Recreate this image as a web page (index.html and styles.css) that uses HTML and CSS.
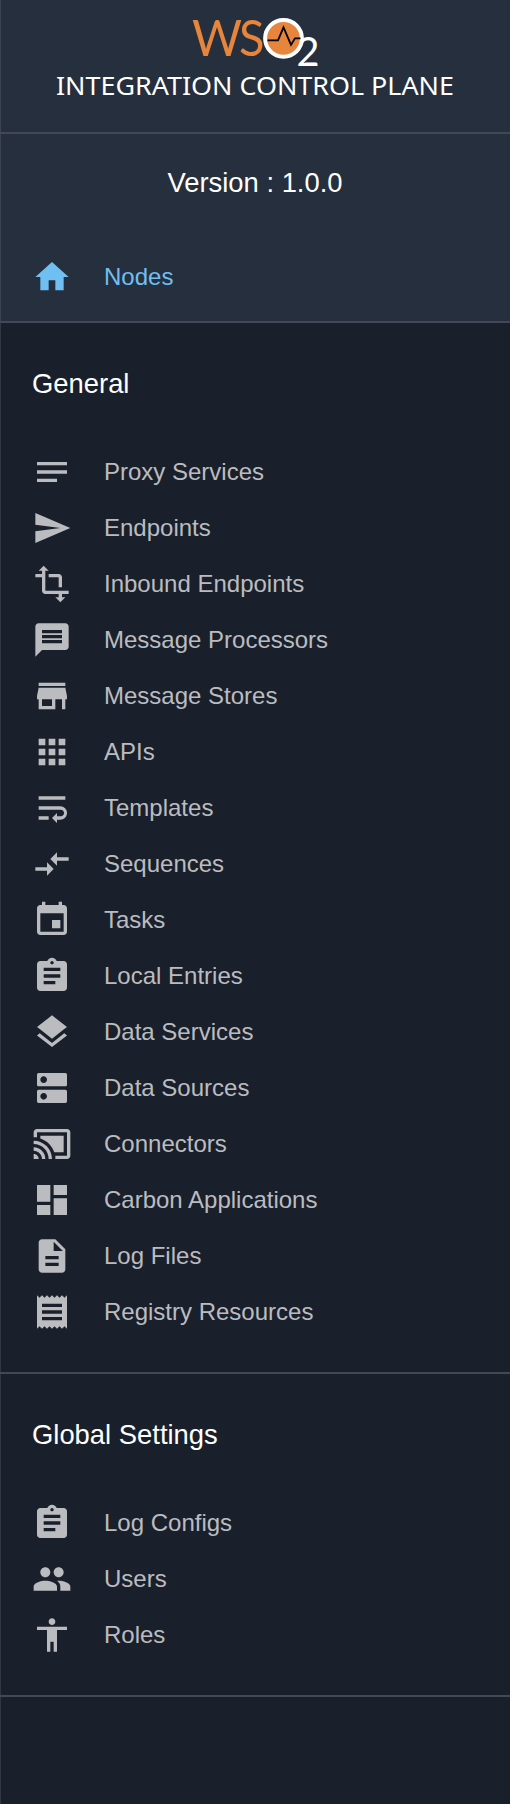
FILE: index.html
```html
<!DOCTYPE html>
<html lang="en">
<head>
<meta charset="utf-8">
<title>Integration Control Plane</title>
<link rel="stylesheet" href="styles.css">
</head>
<body>
<nav class="sidebar">
  <header class="brand">
    <svg class="brand-logo" width="510" height="110" viewBox="0 0 510 110">
      <text class="logo-letter" x="192" y="56" font-size="50" textLength="50" lengthAdjust="spacingAndGlyphs">W</text>
      <text class="logo-letter" x="239" y="56" font-size="50" textLength="25.5" lengthAdjust="spacingAndGlyphs">S</text>
      <circle cx="283.5" cy="38.3" r="18.4" fill="#e6853b" stroke="#fff" stroke-width="4"/>
      <path d="M267.5 40.300h10.500l5.500-13 7.500 17.500 4-6.500h5.500" fill="none" stroke="#000" stroke-width="1.8"/>
      <text class="logo-sub" x="296.5" y="66" font-size="40" textLength="23" lengthAdjust="spacingAndGlyphs">2</text>
      <text class="logo-title" x="56" y="94.5" font-size="26" textLength="398" lengthAdjust="spacingAndGlyphs">INTEGRATION CONTROL PLANE</text>
    </svg>
  </header>
  <section class="home">
    <p class="version">Version : 1.0.0</p>
    <a class="item active"><svg class="icon" viewBox="0 0 24 24"><path d="M10 20v-6h4v6h5v-8h3L12 3 2 12h3v8z"/></svg><span>Nodes</span></a>
  </section>
  <section class="group">
    <h2 class="heading">General</h2>
    <a class="item"><svg class="icon" viewBox="0 0 24 24"><path d="M3 18h12v-2H3v2zM3 6v2h18V6H3zm0 7h18v-2H3v2z"/></svg><span>Proxy Services</span></a>
    <a class="item"><svg class="icon" viewBox="0 0 24 24"><path d="M2.01 21L23 12 2.01 3 2 10l15 2-15 2z"/></svg><span>Endpoints</span></a>
    <a class="item"><svg class="icon" viewBox="0 0 24 24"><path d="M22 18v-2H8V4h2L7 1 4 4h2v2H2v2h4v8c0 1.100.9 2 2 2h8v2h-2l3 3 3-3h-2v-2h4zM10 8h6v6h2V8c0-1.100-.9-2-2-2h-6v2z"/></svg><span>Inbound Endpoints</span></a>
    <a class="item"><svg class="icon" viewBox="0 0 24 24"><path d="M20 2H4c-1.100 0-1.990.9-1.990 2L2 22l4-4h14c1.100 0 2-.9 2-2V4c0-1.100-.9-2-2-2zm-2 12H6v-2h12v2zm0-3H6V9h12v2zm0-3H6V6h12v2z"/></svg><span>Message Processors</span></a>
    <a class="item"><svg class="icon" viewBox="0 0 24 24"><path d="M20 4H4v2h16V4zm1 10v-2l-1-5H4l-1 5v2h1v6h10v-6h4v6h2v-6h1zm-9 4H6v-4h6v4z"/></svg><span>Message Stores</span></a>
    <a class="item"><svg class="icon" viewBox="0 0 24 24"><path d="M4 8h4V4H4v4zm6 12h4v-4h-4v4zm-6 0h4v-4H4v4zm0-6h4v-4H4v4zm6 0h4v-4h-4v4zm6-10v4h4V4h-4zm-6 4h4V4h-4v4zm6 6h4v-4h-4v4zm0 6h4v-4h-4v4z"/></svg><span>APIs</span></a>
    <a class="item"><svg class="icon" viewBox="0 0 24 24"><path d="M4 19h6v-2H4v2zM20 5H4v2h16V5zm-3 6H4v2h13.250c1.100 0 2 .9 2 2s-.9 2-2 2H15v-2l-3 3 3 3v-2h2c2.210 0 4-1.790 4-4s-1.790-4-4-4z"/></svg><span>Templates</span></a>
    <a class="item"><svg class="icon" viewBox="0 0 24 24"><path d="M9.010 14H2v2h7.010v3L13 15l-3.990-4v3zm5.980-1v-3H22V8h-7.010V5L11 9l3.990 4z"/></svg><span>Sequences</span></a>
    <a class="item"><svg class="icon" viewBox="0 0 24 24"><path d="M17 12h-5v5h5v-5zM16 1v2H8V1H6v2H5c-1.110 0-1.990.9-1.990 2L3 19c0 1.100.89 2 2 2h14c1.100 0 2-.9 2-2V5c0-1.100-.9-2-2-2h-1V1h-2zm3 18H5V8h14v11z"/></svg><span>Tasks</span></a>
    <a class="item"><svg class="icon" viewBox="0 0 24 24"><path d="M19 3h-4.180C14.400 1.840 13.300 1 12 1c-1.300 0-2.400.84-2.820 2H5c-1.100 0-2 .9-2 2v14c0 1.100.9 2 2 2h14c1.100 0 2-.9 2-2V5c0-1.100-.9-2-2-2zm-7 0c.55 0 1 .45 1 1s-.45 1-1 1-1-.45-1-1 .45-1 1-1zm2 14H7v-2h7v2zm3-4H7v-2h10v2zm0-4H7V7h10v2z"/></svg><span>Local Entries</span></a>
    <a class="item"><svg class="icon" viewBox="0 0 24 24"><path d="M11.990 18.540l-7.370-5.730L3 14.070l9 7 9-7-1.630-1.270-7.380 5.740zM12 16l7.360-5.730L21 9l-9-7-9 7 1.630 1.270L12 16z"/></svg><span>Data Services</span></a>
    <a class="item"><svg class="icon" viewBox="0 0 24 24"><path d="M20 13H4c-.55 0-1 .45-1 1v6c0 .55.45 1 1 1h16c.55 0 1-.45 1-1v-6c0-.55-.45-1-1-1zM7 19c-1.100 0-2-.9-2-2s.9-2 2-2 2 .9 2 2-.9 2-2 2zM20 3H4c-.55 0-1 .45-1 1v6c0 .55.45 1 1 1h16c.55 0 1-.45 1-1V4c0-.55-.45-1-1-1zM7 9c-1.100 0-2-.9-2-2s.9-2 2-2 2 .9 2 2-.9 2-2 2z"/></svg><span>Data Sources</span></a>
    <a class="item"><svg class="icon" viewBox="0 0 24 24"><path d="M1 18v3h3c0-1.660-1.340-3-3-3zm0-4v2c2.760 0 5 2.240 5 5h2c0-3.870-3.130-7-7-7zm18-7H5v1.630c3.960 1.280 7.090 4.410 8.370 8.370H19V7zM1 10v2c4.970 0 9 4.030 9 9h2c0-6.080-4.930-11-11-11zm20-7H3c-1.100 0-2 .9-2 2v3h2V5h18v14h-7v2h7c1.100 0 2-.9 2-2V5c0-1.100-.9-2-2-2z"/></svg><span>Connectors</span></a>
    <a class="item"><svg class="icon" viewBox="0 0 24 24"><path d="M3 13h8V3H3v10zm0 8h8v-6H3v6zm10 0h8V11h-8v10zm0-18v6h8V3h-8z"/></svg><span>Carbon Applications</span></a>
    <a class="item"><svg class="icon" viewBox="0 0 24 24"><path d="M14 2H6c-1.100 0-1.990.9-1.990 2L4 20c0 1.100.89 2 1.990 2H18c1.100 0 2-.9 2-2V8l-6-6zm2 16H8v-2h8v2zm0-4H8v-2h8v2zm-3-5V3.500L18.500 9H13z"/></svg><span>Log Files</span></a>
    <a class="item"><svg class="icon" viewBox="0 0 24 24"><path d="M18 17H6v-2h12v2zm0-4H6v-2h12v2zm0-4H6V7h12v2zM3 22l1.500-1.500L6 22l1.500-1.500L9 22l1.500-1.500L12 22l1.500-1.500L15 22l1.500-1.500L18 22l1.500-1.500L21 22V2l-1.500 1.500L18 2l-1.500 1.500L15 2l-1.500 1.500L12 2l-1.500 1.500L9 2 7.500 3.500 6 2 4.500 3.500 3 2v20z"/></svg><span>Registry Resources</span></a>
  </section>
  <section class="group">
    <h2 class="heading">Global Settings</h2>
    <a class="item"><svg class="icon" viewBox="0 0 24 24"><path d="M19 3h-4.180C14.400 1.840 13.300 1 12 1c-1.300 0-2.400.84-2.820 2H5c-1.100 0-2 .9-2 2v14c0 1.100.9 2 2 2h14c1.100 0 2-.9 2-2V5c0-1.100-.9-2-2-2zm-7 0c.55 0 1 .45 1 1s-.45 1-1 1-1-.45-1-1 .45-1 1-1zm2 14H7v-2h7v2zm3-4H7v-2h10v2zm0-4H7V7h10v2z"/></svg><span>Log Configs</span></a>
    <a class="item"><svg class="icon" viewBox="0 0 24 24"><path d="M16 11c1.660 0 2.990-1.340 2.990-3S17.660 5 16 5c-1.660 0-3 1.340-3 3s1.340 3 3 3zm-8 0c1.660 0 2.990-1.340 2.990-3S9.660 5 8 5C6.340 5 5 6.340 5 8s1.340 3 3 3zm0 2c-2.330 0-7 1.170-7 3.500V19h14v-2.500c0-2.330-4.670-3.500-7-3.500zm8 0c-.29 0-.62.02-.97.05 1.160.84 1.970 1.970 1.970 3.450V19h6v-2.500c0-2.330-4.670-3.500-7-3.500z"/></svg><span>Users</span></a>
    <a class="item"><svg class="icon" viewBox="0 0 24 24"><path d="M12 2c1.100 0 2 .9 2 2s-.9 2-2 2-2-.9-2-2 .9-2 2-2zm9 7h-6v13h-2v-6h-2v6H9V9H3V7h18v2z"/></svg><span>Roles</span></a>
  </section>
</nav>
</body>
</html>
```
FILE: styles.css
```css
body {
  margin: 0;
  background: #1a202b;
  font-family: "Liberation Sans", Arial, sans-serif;
}

.sidebar {
  box-sizing: border-box;
  min-height: 1804px;
  box-shadow: inset 1px 0 0 rgba(255, 255, 255, 0.1);
}

.brand {
  box-sizing: border-box;
  height: 134px;
  border-bottom: 2px solid #424955;
  background: #262f3d;
  box-shadow: inset 1px 0 0 rgba(255, 255, 255, 0.1);
}

.brand-logo {
  display: block;
}

.logo-letter {
  font-family: Lato, sans-serif;
  fill: #e6853b;
}

.logo-sub {
  font-family: Lato, sans-serif;
  fill: #fff;
}

.logo-title {
  font-family: "Noto Sans", sans-serif;
  fill: #fff;
}

.home {
  box-sizing: border-box;
  height: 189px;
  padding-bottom: 16px;
  border-bottom: 2px solid #424955;
  background: #262f3d;
  box-shadow: inset 1px 0 0 rgba(255, 255, 255, 0.1);
}

.version {
  box-sizing: border-box;
  margin: 0;
  padding-top: 31px;
  height: 115px;
  color: #fff;
  font-size: 27.4px;
  line-height: 36px;
  text-align: center;
}

.item {
  display: flex;
  align-items: center;
  gap: 32px;
  height: 56px;
  padding-left: 32px;
  color: #bbbcc0;
  font-size: 24px;
  line-height: 32px;
}

.active {
  color: #70bff2;
}

.icon {
  width: 40px;
  height: 40px;
  fill: currentColor;
}

.group {
  padding-bottom: 32px;
  border-bottom: 2px solid #424955;
}

.heading {
  box-sizing: border-box;
  height: 121px;
  margin: 0;
  padding: 43px 0 0 32px;
  color: #fff;
  font-size: 27.4px;
  font-weight: 400;
  line-height: 36px;
}
```
